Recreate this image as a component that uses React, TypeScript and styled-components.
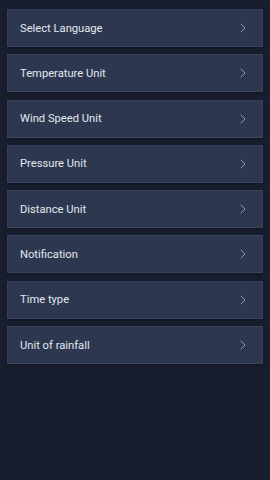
import React from 'react'
import styled, { createGlobalStyle } from 'styled-components'

const GlobalStyle = createGlobalStyle`
  html, body {
    margin: 0;
    padding: 0;
    background: #181e2e;
  }
  body {
    font-family: Roboto, "Noto Sans", "Liberation Sans", sans-serif;
  }
`

const Page = styled.div`
  width: 270px;
  height: 480px;
  background: #181e2e;
  box-sizing: border-box;
  padding: 9px 7px;
  display: flex;
  flex-direction: column;
  gap: 7.3px;
`

const Row = styled.div`
  height: 38px;
  flex-shrink: 0;
  box-sizing: border-box;
  background: #2d3850;
  border: 1px solid #354159;
  border-bottom-color: #3a465e;
  box-shadow: 0 1px 3px rgba(0, 0, 0, 0.35);
  display: flex;
  align-items: center;
  justify-content: space-between;
  padding: 0 16px 0 12px;
  cursor: pointer;
`

const Label = styled.span`
  color: #e3e7ee;
  font-size: 11.2px;
`

const Chevron = () => (
  <svg width="6" height="10" viewBox="0 0 6 10" fill="none">
    <path d="M1 1l4 4-4 4" stroke="#8c95a8" strokeWidth="1" strokeLinecap="round" strokeLinejoin="round" />
  </svg>
)

const items = [
  'Select Language',
  'Temperature Unit',
  'Wind Speed Unit',
  'Pressure Unit',
  'Distance Unit',
  'Notification',
  'Time type',
  'Unit of rainfall',
]

const App = () => {
  return (
    <>
      <GlobalStyle />
      <Page>
        {items.map((item) => (
          <Row key={item}>
            <Label>{item}</Label>
            <Chevron />
          </Row>
        ))}
      </Page>
    </>
  )
}

export default App
